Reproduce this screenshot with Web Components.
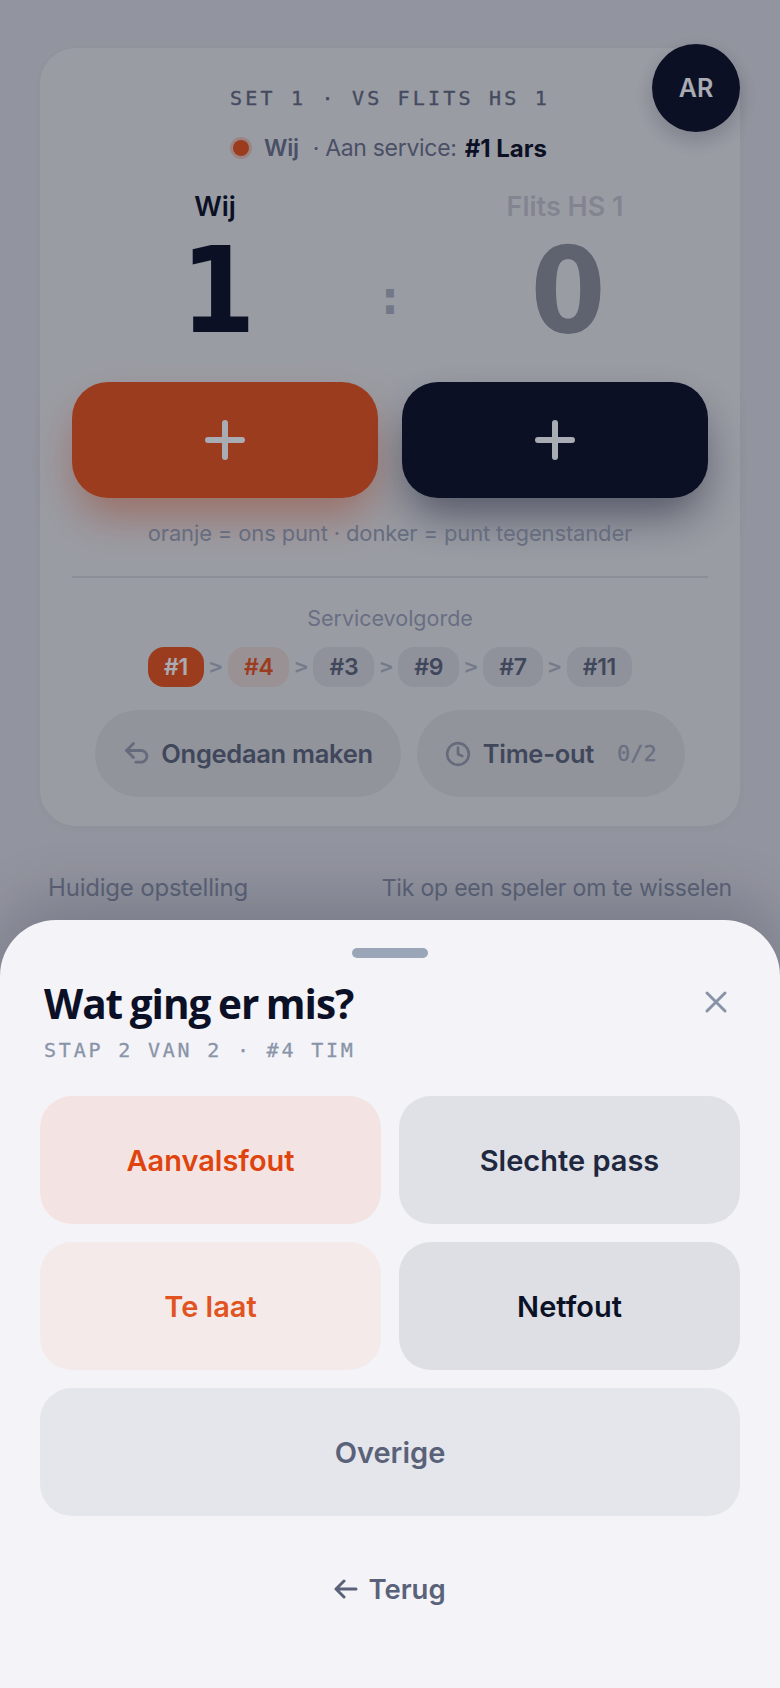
<!DOCTYPE html>
<html lang="nl">
<head>
<meta charset="utf-8">
<title>Wat ging er mis?</title>
<style>
html, body { margin: 0; padding: 0; }
body { width: 780px; height: 1688px; overflow: hidden; background: #dbdbe0; font-family: Inter, "Open Sans", sans-serif; }
</style>
</head>
<body>
<score-screen>
    <score-card>
        <team-score slot="home" name="Wij" value="1" active></team-score>
        <team-score slot="away" name="Flits HS 1" value="0"></team-score>
        <point-button slot="points" tone="home"></point-button>
        <point-button slot="points" tone="away"></point-button>
        <service-chip slot="order" state="current">#1</service-chip>
        <service-chip slot="order" state="next">#4</service-chip>
        <service-chip slot="order">#3</service-chip>
        <service-chip slot="order">#9</service-chip>
        <service-chip slot="order">#7</service-chip>
        <service-chip slot="order" last>#11</service-chip>
        <action-pill slot="actions" icon="undo">Ongedaan maken</action-pill>
        <action-pill slot="actions" icon="clock" count="0/2">Time-out</action-pill>
    </score-card>
    <error-sheet slot="sheet">
        <option-button style="--bg:#f3e4e3;--fg:#e0440e">Aanvalsfout</option-button>
        <option-button style="--bg:#e0e1e6;--fg:#20283f">Slechte pass</option-button>
        <option-button style="--bg:#f5eaea;--fg:#e2541f">Te laat</option-button>
        <option-button style="--bg:#dedfe4;--fg:#0c1226">Netfout</option-button>
        <option-button wide style="--bg:#e5e6eb;--fg:#5a6279">Overige</option-button>
    </error-sheet>
</score-screen>

<script>
const NAVY = '#0b1026';
const ORANGE = '#ea541d';
const MONO = '"DejaVu Sans Mono", "Liberation Mono", monospace';

customElements.define('score-screen', class extends HTMLElement {
    constructor() {
        super();
        this.attachShadow({ mode: 'open' }).innerHTML = `
        <style>
        :host { display: block; position: relative; width: 780px; height: 1688px; overflow: hidden; }
        #page { padding: 48px 40px 0; display: flex; flex-direction: column; }
        #lineup {
            display: flex;
            justify-content: space-between;
            margin: 47px 8px 0;
            font-size: 23px;
            line-height: 30px;
            letter-spacing: -.2px;
            color: #8990a3;
        }
        #lineup span:first-child { font-size: 24px; }
        #scrim { position: absolute; inset: 0; background: rgba(11, 16, 38, .35); }
        </style>
        <div id="page">
            <slot></slot>
            <div id="lineup"><span>Huidige opstelling</span><span>Tik op een speler om te wisselen</span></div>
        </div>
        <div id="scrim"></div>
        <slot name="sheet"></slot>
        `;
    }
});

customElements.define('score-card', class extends HTMLElement {
    constructor() {
        super();
        this.attachShadow({ mode: 'open' }).innerHTML = `
        <style>
        :host {
            display: block;
            position: relative;
            height: 778px;
            box-sizing: border-box;
            padding: 36px 32px 0;
            background: #e7e7e8;
            border-radius: 36px;
            box-shadow: 0 2px 12px rgba(11, 16, 38, .04);
        }
        #avatar {
            position: absolute;
            top: -4px;
            right: 0;
            width: 88px;
            height: 88px;
            border-radius: 50%;
            background: ${NAVY};
            color: #fff;
            font-size: 25px;
            font-weight: 600;
            display: flex;
            align-items: center;
            justify-content: center;
            box-shadow: 0 8px 20px rgba(11, 16, 38, .2);
        }
        #set {
            font: 500 20px/28px ${MONO};
            letter-spacing: 3.2px;
            text-align: center;
            color: #646b7f;
            -webkit-text-stroke: .4px currentColor;
        }
        #service {
            margin-top: 20px;
            display: flex;
            justify-content: center;
            align-items: center;
            height: 32px;
            font-size: 23px;
            letter-spacing: -.3px;
            color: #6c7288;
        }
        #dot {
            width: 16px;
            height: 16px;
            border-radius: 50%;
            background: ${ORANGE};
            box-shadow: 0 0 0 3px rgba(234, 84, 29, .25);
            margin-right: 15px;
        }
        #service b { font-size: 24px; font-weight: 700; letter-spacing: 0; color: ${NAVY}; margin-left: 8px; }
        #service .us { font-weight: 600; margin-right: 14px; }
        #score {
            margin-top: 27px;
            display: grid;
            grid-template-columns: 1fr 64px 1fr;
        }
        #colon {
            align-self: end;
            height: 84px;
            margin-bottom: 19px;
            text-align: center;
            font: 700 48px/84px ${MONO};
            color: #a9b0bd;
        }
        #points { margin-top: 24px; display: grid; grid-template-columns: 1fr 1fr; gap: 24px; }
        #hint {
            margin-top: 20px;
            text-align: center;
            font-size: 22px;
            line-height: 30px;
            letter-spacing: -.15px;
            color: #979eb0;
        }
        hr { margin: 28px 0 0; border: 0; height: 2px; background: #d1d2d5; }
        #order-title {
            margin-top: 26px;
            text-align: center;
            font-size: 21.5px;
            line-height: 28px;
            color: #9ca2b4;
        }
        #order { margin-top: 15px; display: flex; justify-content: center; }
        #actions { margin-top: 23px; display: flex; justify-content: center; gap: 16px; }
        </style>
        <div id="avatar">AR</div>
        <div id="set">SET 1 · VS FLITS HS 1</div>
        <div id="service"><span id="dot"></span><span class="us">Wij</span><span>· Aan service:</span><b>#1 Lars</b></div>
        <div id="score">
            <slot name="home"></slot>
            <div id="colon">:</div>
            <slot name="away"></slot>
        </div>
        <div id="points"><slot name="points"></slot></div>
        <div id="hint">oranje = ons punt · donker = punt tegenstander</div>
        <hr>
        <div id="order-title">Servicevolgorde</div>
        <div id="order"><slot name="order"></slot></div>
        <div id="actions"><slot name="actions"></slot></div>
        `;
    }
});

customElements.define('team-score', class extends HTMLElement {
    constructor() {
        super();
        const active = this.hasAttribute('active');
        this.attachShadow({ mode: 'open' }).innerHTML = `
        <style>
        :host { display: block; text-align: center; }
        #name { font-size: 27px; line-height: 32px; margin-bottom: 1px; font-weight: 600; color: ${active ? NAVY : '#c2c4c8'}; }
        #value {
            font: 700 120px/134px "DejaVu Sans", sans-serif;
            font-stretch: condensed;
            padding-left: 6px;
            color: ${active ? NAVY : '#8c9098'};
        }
        </style>
        <div id="name">${this.getAttribute('name')}</div>
        <div id="value">${this.getAttribute('value')}</div>
        `;
    }
});

customElements.define('point-button', class extends HTMLElement {
    constructor() {
        super();
        const home = this.getAttribute('tone') === 'home';
        const color = home ? ORANGE : NAVY;
        const glow = home ? 'rgba(234, 84, 29, .5)' : 'rgba(11, 16, 38, .5)';
        this.attachShadow({ mode: 'open' }).innerHTML = `
        <style>
        :host {
            display: flex;
            align-items: center;
            justify-content: center;
            height: 116px;
            border-radius: 36px;
            background: ${color};
            box-shadow: 0 22px 44px -6px ${glow};
        }
        </style>
        <svg width="40" height="40" viewBox="0 0 40 40" fill="none" stroke="#fff" stroke-width="6" stroke-linecap="round">
            <path d="M20 3v34M3 20h34"/>
        </svg>
        `;
    }
});

customElements.define('service-chip', class extends HTMLElement {
    constructor() {
        super();
        const state = this.getAttribute('state');
        const bg = state === 'current' ? ORANGE : state === 'next' ? 'rgba(234, 84, 29, .11)' : 'rgba(11, 16, 38, .07)';
        const fg = state === 'current' ? '#fff' : state === 'next' ? ORANGE : '#5c6579';
        this.attachShadow({ mode: 'open' }).innerHTML = `
        <style>
        :host { display: flex; align-items: center; }
        #chip {
            height: 40px;
            padding: 0 16px;
            border-radius: 16px;
            background: ${bg};
            color: ${fg};
            font-size: 23px;
            line-height: 40px;
            font-weight: 600;
            letter-spacing: -.3px;
        }
        #sep { width: 24px; text-align: center; font: 700 22px/40px ${MONO}; color: #aeb4c2; }
        </style>
        <div id="chip"><slot></slot></div>
        ${this.hasAttribute('last') ? '' : '<div id="sep">&gt;</div>'}
        `;
    }
});

const ICONS = {
    undo: { size: 28, gap: 10, paths: '<path d="M9 3 3 9l6 6"/><path d="M3 9h12.5a5 5 0 0 1 0 10H11"/>' },
    clock: { size: 26, gap: 12, paths: '<circle cx="12" cy="12" r="10"/><path d="M12 6v6l4 2"/>' }
};

customElements.define('action-pill', class extends HTMLElement {
    constructor() {
        super();
        const count = this.getAttribute('count');
        const icon = ICONS[this.getAttribute('icon')];
        this.attachShadow({ mode: 'open' }).innerHTML = `
        <style>
        :host {
            display: flex;
            align-items: center;
            height: 87px;
            padding: 0 28px;
            border-radius: 44px;
            background: rgba(11, 16, 38, .06);
            color: #5c6579;
            font-size: 25.5px;
            font-weight: 600;
            letter-spacing: -.3px;
        }
        svg { flex: none; margin-right: ${icon.gap}px; color: #959cab; }
        #count { margin-left: 23px; font: 500 22px ${MONO}; letter-spacing: 0; color: #9ca3b2; -webkit-text-stroke: .3px currentColor; }
        </style>
        <svg width="${icon.size}" height="${icon.size}" viewBox="0 0 24 24" fill="none" stroke="currentColor" stroke-width="2.4" stroke-linecap="round" stroke-linejoin="round">${icon.paths}</svg>
        <span><slot></slot></span>
        ${count ? `<span id="count">${count}</span>` : ''}
        `;
    }
});

customElements.define('option-button', class extends HTMLElement {
    constructor() {
        super();
        this.attachShadow({ mode: 'open' }).innerHTML = `
        <style>
        :host {
            display: flex;
            align-items: center;
            justify-content: center;
            height: 128px;
            border-radius: 32px;
            background: var(--bg);
            color: var(--fg);
            font-size: 29px;
            font-weight: 600;
        }
        :host([wide]) { grid-column: 1 / -1; }
        </style>
        <slot></slot>
        `;
    }
});

customElements.define('error-sheet', class extends HTMLElement {
    constructor() {
        super();
        this.attachShadow({ mode: 'open' }).innerHTML = `
        <style>
        :host {
            display: block;
            position: absolute;
            left: 0;
            right: 0;
            bottom: 0;
            height: 768px;
            box-sizing: border-box;
            padding: 28px 40px 0;
            background: #f3f3f8;
            border-radius: 56px 56px 0 0;
            box-shadow: 0 -20px 60px rgba(11, 16, 38, .18);
        }
        #handle { width: 76px; height: 10px; margin: 0 auto; border-radius: 5px; background: #9ba5b8; }
        #head { margin-top: 22px; padding-left: 4px; display: flex; justify-content: space-between; }
        h2 {
            margin: 0;
            font: 750 40.5px/48px "Open Sans", sans-serif;
            letter-spacing: -1px;
            word-spacing: -2px;
            color: ${NAVY};
        }
        #step {
            margin-top: 8px;
            font: 400 20px/28px ${MONO};
            letter-spacing: 2.8px;
            color: #8a94a8;
            -webkit-text-stroke: .3px currentColor;
        }
        #close { margin: 10px 12px 0 0; color: #8893a8; }
        #grid { margin-top: 32px; display: grid; grid-template-columns: 1fr 1fr; gap: 18px; }
        #back {
            margin-top: 55px;
            display: flex;
            justify-content: center;
            align-items: center;
            gap: 10px;
            font-size: 27.5px;
            line-height: 36px;
            font-weight: 600;
            color: #5a6279;
        }
        </style>
        <div id="handle"></div>
        <div id="head">
            <div>
                <h2>Wat ging er mis?</h2>
                <div id="step">STAP 2 VAN 2 · #4 TIM</div>
            </div>
            <svg id="close" width="24" height="24" viewBox="0 0 24 24" fill="none" stroke="currentColor" stroke-width="3" stroke-linecap="round">
                <path d="M3 3l18 18M21 3 3 21"/>
            </svg>
        </div>
        <div id="grid"><slot></slot></div>
        <div id="back">
            <svg width="24" height="24" viewBox="0 0 24 24" fill="none" stroke="currentColor" stroke-width="3" stroke-linecap="round" stroke-linejoin="round">
                <path d="M22 12H2M10 4l-8 8 8 8"/>
            </svg>
            <span>Terug</span>
        </div>
        `;
    }
});
</script>
</body>
</html>
